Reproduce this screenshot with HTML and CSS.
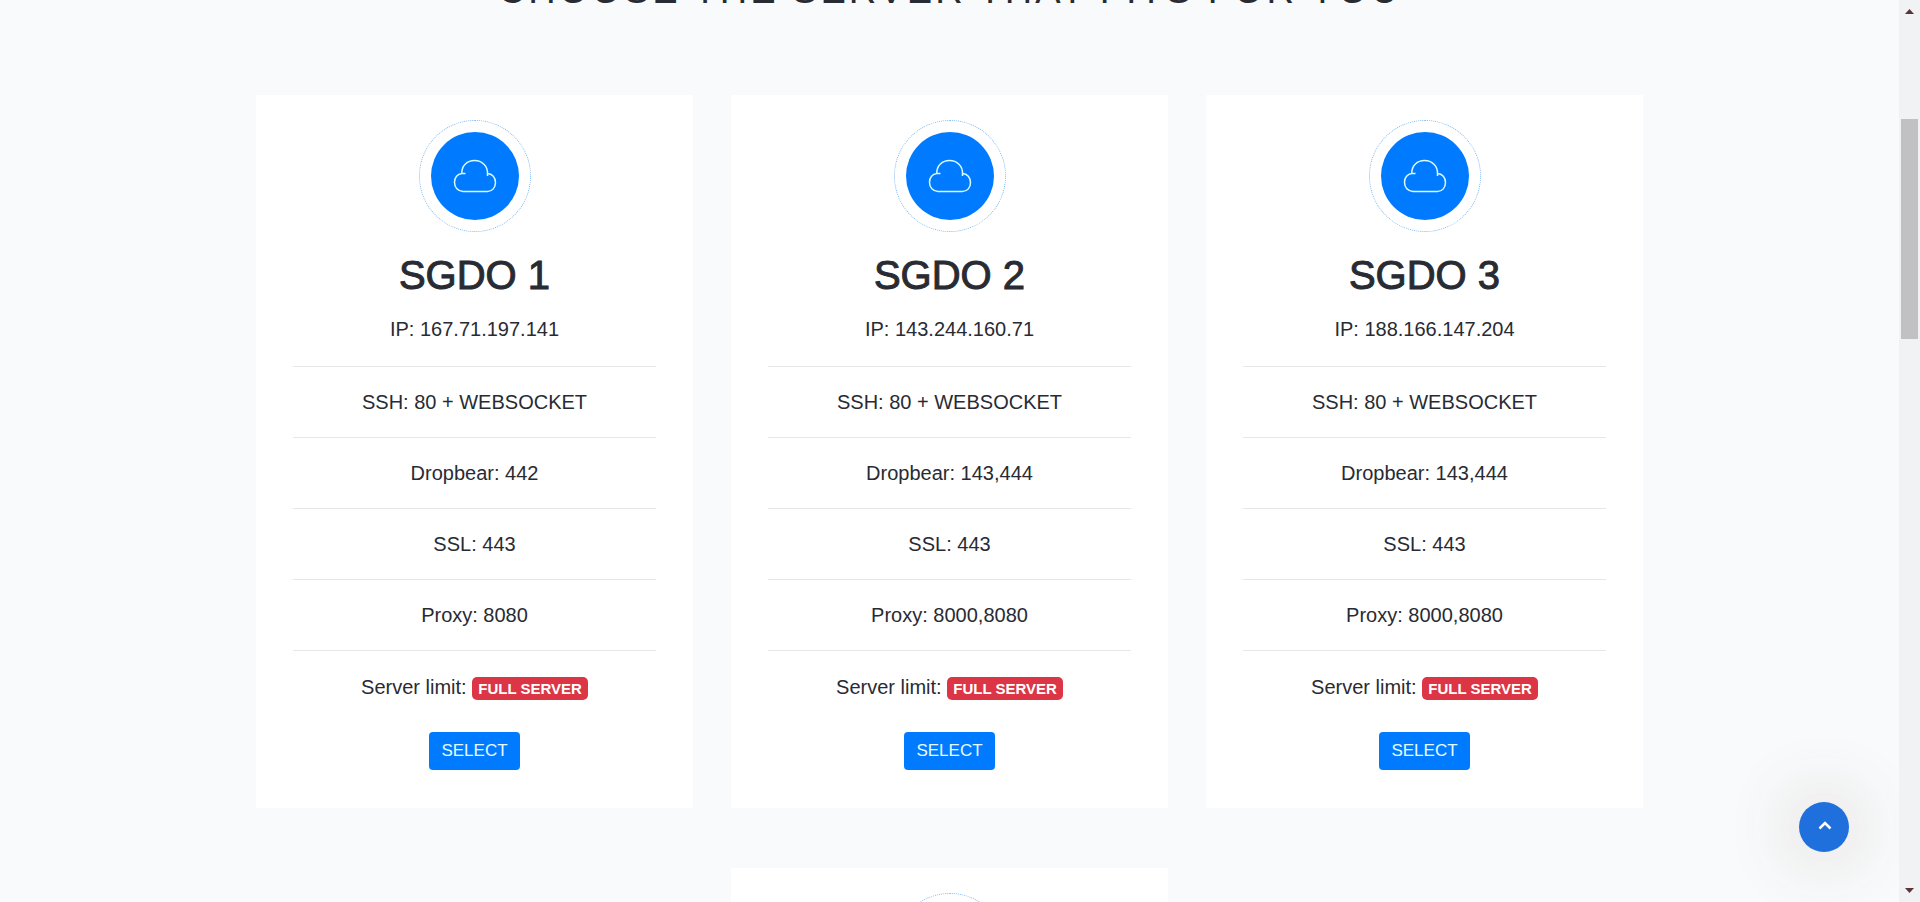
FILE: index.html
```html
<!DOCTYPE html>
<html lang="en">
<head>
<meta charset="utf-8">
<title>Choose the server</title>
<link rel="stylesheet" href="styles.css">
</head>
<body>
<svg class="defs" aria-hidden="true">
  <symbol id="cloud" viewBox="0 0 44 34">
    <path d="M12.500 14.500H8.800C4.500 15 1.500 18.700 1.500 23.200C1.500 28.500 5 32.500 10 32.500H34.500C39.300 32.500 42.500 28.500 42.500 23.500C42.500 18.500 39.300 14.700 34.500 14.500M8.800 14.500C8.500 6.500 14.500 1.500 21.500 1.500C29 1.500 34.800 7 34.500 14.500V17"/>
  </symbol>
</svg>
<main class="page">
  <h2 class="page-title">CHOOSE THE SERVER THAT FITS FOR YOU</h2>
  <div class="servers">
    <article class="card">
      <div class="ring"><div class="disc"><svg class="cloud"><use href="#cloud"/></svg></div></div>
      <h3 class="name">SGDO 1</h3>
      <ul class="specs">
        <li>IP: 167.71.197.141</li>
        <li>SSH: 80 + WEBSOCKET</li>
        <li>Dropbear: 442</li>
        <li>SSL: 443</li>
        <li>Proxy: 8080</li>
        <li>Server limit: <span class="badge">FULL SERVER</span></li>
      </ul>
      <button class="select" type="button">SELECT</button>
    </article>
    <article class="card">
      <div class="ring"><div class="disc"><svg class="cloud"><use href="#cloud"/></svg></div></div>
      <h3 class="name">SGDO 2</h3>
      <ul class="specs">
        <li>IP: 143.244.160.71</li>
        <li>SSH: 80 + WEBSOCKET</li>
        <li>Dropbear: 143,444</li>
        <li>SSL: 443</li>
        <li>Proxy: 8000,8080</li>
        <li>Server limit: <span class="badge">FULL SERVER</span></li>
      </ul>
      <button class="select" type="button">SELECT</button>
    </article>
    <article class="card">
      <div class="ring"><div class="disc"><svg class="cloud"><use href="#cloud"/></svg></div></div>
      <h3 class="name">SGDO 3</h3>
      <ul class="specs">
        <li>IP: 188.166.147.204</li>
        <li>SSH: 80 + WEBSOCKET</li>
        <li>Dropbear: 143,444</li>
        <li>SSL: 443</li>
        <li>Proxy: 8000,8080</li>
        <li>Server limit: <span class="badge">FULL SERVER</span></li>
      </ul>
      <button class="select" type="button">SELECT</button>
    </article>
    <article class="card card-middle">
      <div class="ring"><div class="disc"><svg class="cloud"><use href="#cloud"/></svg></div></div>
    </article>
  </div>
  <button class="to-top" type="button" aria-label="Back to top">
    <svg class="chevron" viewBox="0 0 14 9"><path d="M1.500 7.500L7 2L12.500 7.500"/></svg>
  </button>
</main>
<div class="scrollbar" aria-hidden="true">
  <svg class="arrow" viewBox="0 0 9 5"><path d="M0 5L4.500 0L9 5Z"/></svg>
  <div class="track"><div class="thumb"></div></div>
  <svg class="arrow" viewBox="0 0 9 5"><path d="M0 0L4.500 5L9 0Z"/></svg>
</div>
</body>
</html>
```
FILE: styles.css
```css
* {
  box-sizing: border-box;
}

body {
  margin: 0;
  height: 100vh;
  overflow: hidden;
  display: flex;
  background: #f8fafc;
  color: #292b33;
  font: 20px/30px "Liberation Sans", Arial, sans-serif;
}

.defs {
  position: absolute;
  width: 0;
  height: 0;
}

.page {
  flex: 1;
  min-width: 0;
  padding: 0 24px;
}

/* The page is scrolled so that only the foot of the title shows. */
.page-title {
  margin: -32px 0 83px;
  font-size: 38px;
  line-height: 44px;
  font-weight: 400;
  letter-spacing: 3px;
  text-align: center;
}

.servers {
  display: grid;
  grid-template-columns: repeat(3, 1fr);
  gap: 60px 38px;
  max-width: 1387px;
  margin: 0 auto;
}

.card {
  display: flex;
  flex-direction: column;
  align-items: center;
  padding: 25px 37px 38px;
  background: #fff;
}

.card-middle {
  grid-column: 2;
}

.ring {
  display: grid;
  place-items: center;
  width: 112px;
  height: 112px;
  border: 1px dotted #7fb8ee;
  border-radius: 50%;
}

.disc {
  display: grid;
  place-items: center;
  width: 88px;
  height: 88px;
  border-radius: 50%;
  background: #007bff;
}

.cloud {
  width: 44px;
  height: 34px;
  fill: none;
  stroke: #d9fbff;
  stroke-width: 1.5;
}

.name {
  margin: 19px 0 15px;
  font-size: 40px;
  line-height: 48px;
  font-weight: 500;
  -webkit-text-stroke: 1px;
}

.specs {
  align-self: stretch;
  margin: 0 0 30px;
  padding: 0;
  list-style: none;
  text-align: center;
}

.specs li + li {
  margin-top: 22px;
  padding-top: 20px;
  border-top: 1px solid #e5e7e8;
}

.specs li + li + li {
  margin-top: 20px;
}

.specs li:last-child {
  padding-top: 21px;
}

.badge {
  display: inline-block;
  padding: 4px 6px;
  border-radius: 5px;
  background: #dc3545;
  color: #fff;
  font-size: 15px;
  line-height: 15px;
  font-weight: 700;
}

.select {
  padding: 4px 12px;
  border: 0;
  border-radius: 4px;
  background: #007bff;
  color: #e6fbff;
  font: 17px/30px "Liberation Sans", Arial, sans-serif;
}

.to-top {
  position: fixed;
  right: 71px;
  bottom: 50px;
  display: grid;
  place-items: center;
  width: 50px;
  height: 50px;
  padding: 0 0 4px 2px;
  border: 0;
  border-radius: 50%;
  background: #1f6fdc;
  box-shadow: 0 0 70px rgba(100, 80, 20, 0.3);
}

.chevron {
  width: 14px;
  height: 9px;
  fill: none;
  stroke: #fff;
  stroke-width: 2.5;
}

.scrollbar {
  position: relative;
  display: flex;
  flex-direction: column;
  align-items: center;
  width: 21px;
  padding: 9px 0;
  background: #f1f2f4;
}

.arrow {
  width: 9px;
  height: 5px;
  fill: #5a3436;
}

.track {
  flex: 1;
  padding-top: 105px;
}

.thumb {
  width: 17px;
  height: 220px;
  background: #c1c1c3;
}
```
